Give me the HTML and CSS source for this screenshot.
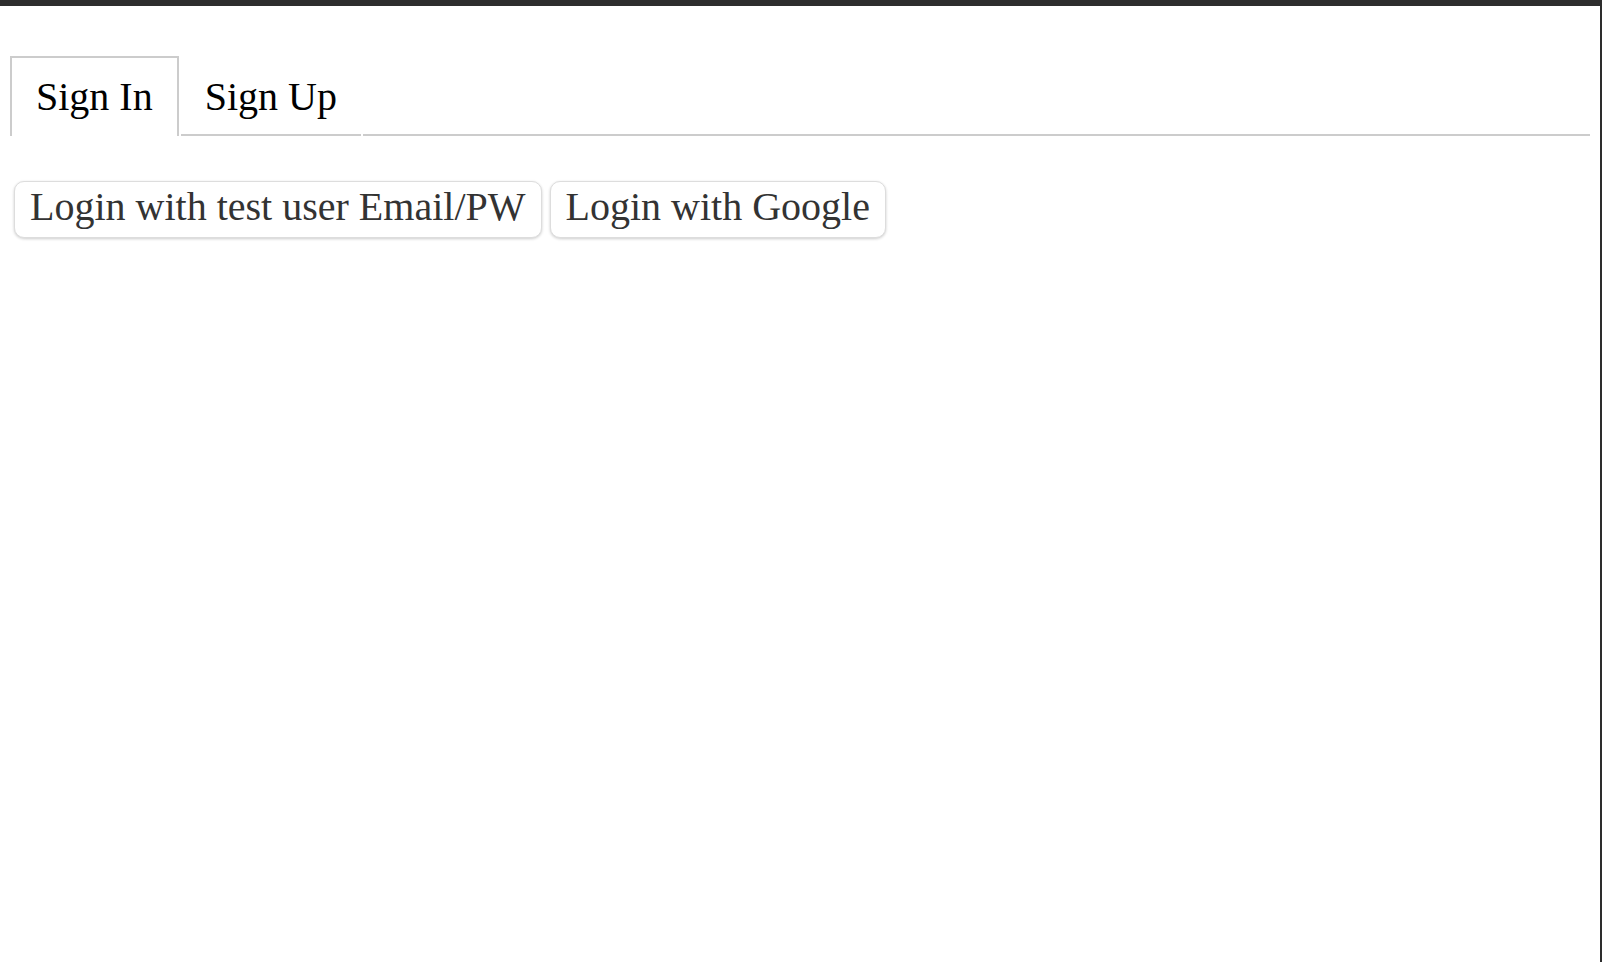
FILE: index.html
```html
<!DOCTYPE html>
<html lang="en">
<head>
<meta charset="utf-8">
<title>Sign In</title>
<link rel="stylesheet" href="styles.css">
</head>
<body>
<div class="frame">
  <div class="tabs">
    <div class="tab selected">Sign In</div>
    <div class="tab">Sign Up</div>
    <div class="tab-fill"></div>
  </div>
  <div class="actions">
    <button class="btn">Login with test user Email/PW</button>
    <button class="btn">Login with Google</button>
  </div>
</div>
</body>
</html>
```
FILE: styles.css
```css
html, body {
  margin: 0;
  padding: 0;
  height: 100%;
}
body {
  background: #2d2d2d;
  font-family: "Liberation Serif", "Times New Roman", serif;
}
.frame {
  box-sizing: border-box;
  background: #ffffff;
  margin: 6px 2px 0 0;
  height: calc(100% - 6px);
  padding: 50px 10px 0 10px;
}
.tabs {
  display: flex;
  align-items: stretch;
  gap: 2px;
  font-size: 40px;
  line-height: 46px;
  color: #000;
}
.tab {
  padding: 16px 24px 14px 24px;
  border-top: 2px solid transparent;
  border-bottom: 2px solid #cccccc;
  cursor: pointer;
}
.tab.selected {
  border: 2px solid #cccccc;
  border-bottom: none;
  padding-bottom: 16px;
}
.tab-fill {
  flex: 1;
  border-bottom: 2px solid #cccccc;
}
.actions {
  display: flex;
  gap: 8px;
  margin: 45px 0 0 4px;
}
.btn {
  font-family: "Liberation Serif", "Times New Roman", serif;
  font-size: 40px;
  line-height: 46px;
  color: #333333;
  background: #ffffff;
  border: 1px solid #dddddd;
  border-radius: 10px;
  padding: 2px 15px 7px 15px;
  box-shadow: 0 1px 3px rgba(0, 0, 0, 0.2);
  cursor: pointer;
}
```
